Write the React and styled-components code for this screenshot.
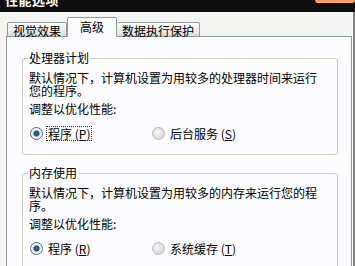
import React from 'react';
import styled, { createGlobalStyle } from 'styled-components';

const Global = createGlobalStyle`
  html, body {
    margin: 0;
    padding: 0;
    background: #f3f3f3;
    overflow: hidden;
  }
  body {
    font-family: "Noto Sans CJK SC", "DejaVu Sans", sans-serif;
    font-size: 12px;
    color: #000;
  }
`;

const Window = styled.div`
  width: 355px;
  height: 266px;
  display: flex;
  flex-direction: column;
  overflow: hidden;
`;

const TitleBar = styled.div`
  height: 12px;
  flex: none;
  background: #0e0e0e;
  display: flex;
  justify-content: space-between;
  align-items: flex-start;
  overflow: hidden;
`;

const Title = styled.span`
  margin: -7px 0 0 5px;
  font-size: 13px;
  line-height: 13px;
  font-weight: bold;
  color: #fff;
  letter-spacing: 0.5px;
`;

const CloseButton = styled.span`
  width: 40px;
  height: 20px;
  margin-top: -17px;
  border-radius: 0 0 3px 3px;
  background: linear-gradient(180deg, #d8501c 0%, #f08a3c 80%, #f6b07a 100%);
`;

const Client = styled.div`
  flex: 1;
  display: flex;
  flex-direction: column;
  padding: 5px 1px 0 6px;
  border-right: 2px solid #858585;
  background: #f4f4f2;
`;

const TabRow = styled.div`
  display: flex;
  align-items: flex-end;
  height: 20px;
  padding-left: 1px;
  margin-bottom: -1px;
  position: relative;
  z-index: 1;
`;

const Tab = styled.div`
  height: ${({ active }) => (active ? '20px' : '15px')};
  box-sizing: border-box;
  padding: ${({ active }) => (active ? '2px 12px 0' : '1px 5px 0')};
  line-height: ${({ active }) => (active ? '14px' : '13px')};
  border: 1px solid #919b9c;
  border-bottom: ${({ active }) => (active ? '1px solid #fcfcfe' : '1px solid #919b9c')};
  border-left: ${({ first, active }) => (first || active ? '1px solid #919b9c' : 'none')};
  border-radius: 2px 2px 0 0;
  background: ${({ active }) =>
    active ? '#fcfcfe' : 'linear-gradient(180deg, #fdfdfd 0%, #ececec 60%, #d9d9d9 100%)'};
  white-space: nowrap;
`;

const Panel = styled.div`
  flex: 1;
  border: 1px solid #919b9c;
  border-bottom: none;
  background: #fcfcfe;
  padding: 15px 13px 0 15px;
  display: flex;
  flex-direction: column;
  gap: 12px;
`;

const Group = styled.fieldset`
  margin: 0;
  border: 1px solid #d0d0bf;
  border-radius: 3px;
  padding: 7px 0 14px 6px;
  min-width: 0;
`;

const Legend = styled.legend`
  padding: 0 1px;
  line-height: 12px;
  margin-left: -1px;
`;

const Desc = styled.div`
  line-height: 13px;
  white-space: nowrap;
`;

const Hint = styled.div`
  line-height: 12px;
  margin-top: 6px;
`;

const Options = styled.div`
  display: grid;
  grid-template-columns: 122px auto;
  margin-top: 11px;
  padding-left: 1px;
`;

const Option = styled.label`
  display: flex;
  align-items: center;
  gap: 3px;
  height: 14px;
`;

const Radio = styled.span`
  width: 11px;
  height: 11px;
  border-radius: 50%;
  border: 1px solid ${({ checked }) => (checked ? '#4a6d8c' : '#b9b9b9')};
  background: ${({ checked }) =>
    checked
      ? 'radial-gradient(circle at 50% 50%, #3d6e7e 0, #21505f 2.5px, #dfe6ec 3.5px, #fbfbfb 6px)'
      : 'radial-gradient(circle at 40% 40%, #f6f6f6 0, #dcdcdc 6px)'};
  display: inline-block;
  flex: none;
  margin-right: 1px;
`;

const Caption = styled.span`
  line-height: 13px;
  padding: 0 1px;
  outline: ${({ focused }) => (focused ? '1px dotted #333' : 'none')};
  white-space: nowrap;
`;

const Key = styled.u`
  text-decoration-thickness: 1px;
  text-underline-offset: 1px;
`;

const RadioOption = ({ label, hotkey, checked, focused }) => (
  <Option>
    <Radio checked={checked} />
    <Caption focused={focused}>
      {label} (<Key>{hotkey}</Key>)
    </Caption>
  </Option>
);

export default function App() {
  return (
    <>
      <Global />
      <Window>
        <TitleBar>
          <Title>性能选项</Title>
          <CloseButton />
        </TitleBar>
        <Client>
          <TabRow>
            <Tab first>视觉效果</Tab>
            <Tab active>高级</Tab>
            <Tab>数据执行保护</Tab>
          </TabRow>
          <Panel>
            <Group>
              <Legend>处理器计划</Legend>
              <Desc>
                默认情况下，计算机设置为用较多的处理器时间来运行
                <br />
                您的程序。
              </Desc>
              <Hint>调整以优化性能:</Hint>
              <Options>
                <RadioOption label="程序" hotkey="P" checked focused />
                <RadioOption label="后台服务" hotkey="S" />
              </Options>
            </Group>
            <Group>
              <Legend>内存使用</Legend>
              <Desc>
                默认情况下，计算机设置为用较多的内存来运行您的程
                <br />
                序。
              </Desc>
              <Hint>调整以优化性能:</Hint>
              <Options>
                <RadioOption label="程序" hotkey="R" checked />
                <RadioOption label="系统缓存" hotkey="T" />
              </Options>
            </Group>
          </Panel>
        </Client>
      </Window>
    </>
  );
}
